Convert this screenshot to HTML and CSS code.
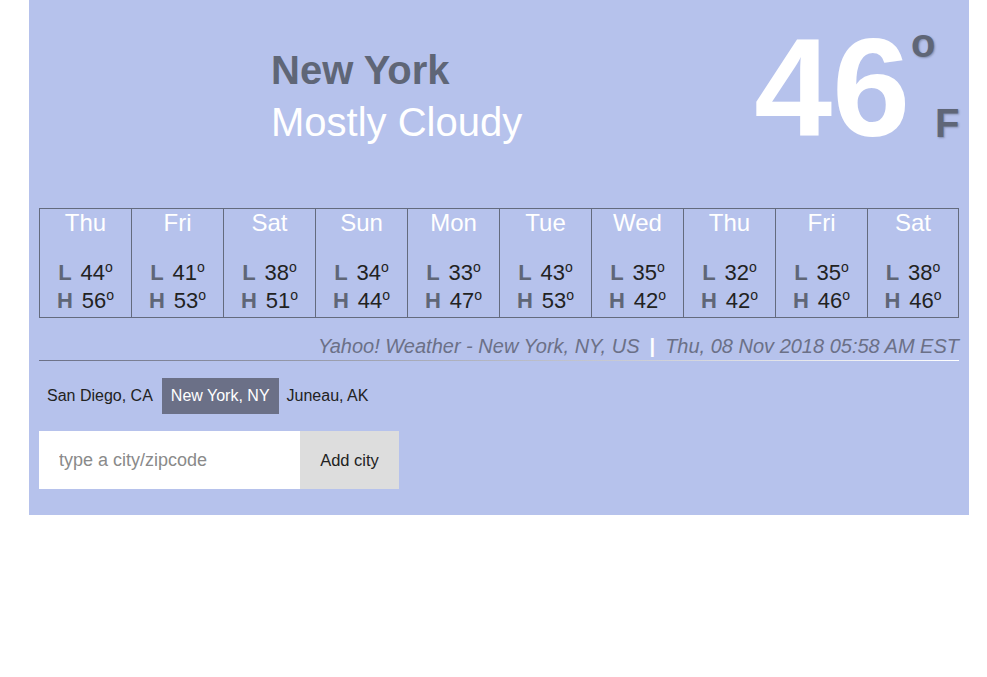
FILE: index.html
```html
<!DOCTYPE html>
<html>
<head>
<meta charset="utf-8">
<link rel="stylesheet" href="styles.css">
</head>
<body>
<div class="app">
  <header class="hero">
    <div class="place">
      <div class="city">New York</div>
      <div class="cond">Mostly Cloudy</div>
    </div>
    <div class="temp">
      <div class="temp-num">46</div>
      <div class="temp-unit">
        <span class="deg">o</span>
        <span class="unit">F</span>
      </div>
    </div>
  </header>

  <div class="forecast">
    <div class="day"><div class="dname">Thu</div><div class="row first"><b>L</b>44<span class="o">o</span></div><div class="row"><b>H</b>56<span class="o">o</span></div></div>
    <div class="day"><div class="dname">Fri</div><div class="row first"><b>L</b>41<span class="o">o</span></div><div class="row"><b>H</b>53<span class="o">o</span></div></div>
    <div class="day"><div class="dname">Sat</div><div class="row first"><b>L</b>38<span class="o">o</span></div><div class="row"><b>H</b>51<span class="o">o</span></div></div>
    <div class="day"><div class="dname">Sun</div><div class="row first"><b>L</b>34<span class="o">o</span></div><div class="row"><b>H</b>44<span class="o">o</span></div></div>
    <div class="day"><div class="dname">Mon</div><div class="row first"><b>L</b>33<span class="o">o</span></div><div class="row"><b>H</b>47<span class="o">o</span></div></div>
    <div class="day"><div class="dname">Tue</div><div class="row first"><b>L</b>43<span class="o">o</span></div><div class="row"><b>H</b>53<span class="o">o</span></div></div>
    <div class="day"><div class="dname">Wed</div><div class="row first"><b>L</b>35<span class="o">o</span></div><div class="row"><b>H</b>42<span class="o">o</span></div></div>
    <div class="day"><div class="dname">Thu</div><div class="row first"><b>L</b>32<span class="o">o</span></div><div class="row"><b>H</b>42<span class="o">o</span></div></div>
    <div class="day"><div class="dname">Fri</div><div class="row first"><b>L</b>35<span class="o">o</span></div><div class="row"><b>H</b>46<span class="o">o</span></div></div>
    <div class="day"><div class="dname">Sat</div><div class="row first"><b>L</b>38<span class="o">o</span></div><div class="row"><b>H</b>46<span class="o">o</span></div></div>
  </div>

  <div class="source">Yahoo! Weather - New York, NY, US<span class="sep">|</span>Thu, 08 Nov 2018 05:58 AM EST</div>
  <div class="rule"></div>

  <nav class="tabs">
    <span class="tab">San Diego, CA</span>
    <span class="tab active">New York, NY</span>
    <span class="tab">Juneau, AK</span>
  </nav>

  <form class="add">
    <input class="add-input" type="text" placeholder="type a city/zipcode">
    <button class="add-btn" type="button">Add city</button>
  </form>
</div>
</body>
</html>
```

FILE: styles.css
```css
* { box-sizing: border-box; }

body {
  margin: 0;
  background: #ffffff;
  font-family: "Liberation Sans", Arial, sans-serif;
}

.app {
  width: 940px;
  margin-left: 29px;
  background: #b6c2ec;
  padding: 0 10px 26px 10px;
}

.hero {
  height: 208px;
  display: flex;
  justify-content: space-between;
  align-items: flex-start;
}

.place {
  margin-left: 232px;
  margin-top: 44px;
}

.city {
  font-size: 40px;
  line-height: 52px;
  font-weight: bold;
  color: #5f6677;
}

.cond {
  font-size: 40px;
  line-height: 52px;
  color: #ffffff;
}

.temp {
  display: flex;
  align-items: flex-start;
}

.temp-num {
  font-size: 140px;
  line-height: 140px;
  font-weight: bold;
  color: #ffffff;
  margin-top: 18px;
  margin-right: 1px;
}

.temp-unit {
  display: flex;
  flex-direction: column;
  align-items: flex-start;
  margin-top: 23px;
  width: 48px;
}

.deg, .unit {
  font-size: 40px;
  line-height: 40px;
  font-weight: bold;
  color: #5f6677;
  text-shadow: 1px 1px 2px rgba(40, 45, 60, 0.35);
}

.unit {
  margin-top: 40px;
  margin-left: 24px;
}

.forecast {
  display: grid;
  grid-template-columns: repeat(9, 92px) 91px;
  width: 920px;
  border-top: 1px solid #646b7e;
  border-bottom: 1px solid #646b7e;
  border-right: 1px solid #646b7e;
}

.day {
  text-align: center;
  border-left: 1px solid #646b7e;
  padding-bottom: 2px;
}

.dname {
  font-size: 24px;
  line-height: 28px;
  color: #ffffff;
}

.row {
  font-size: 22px;
  line-height: 28px;
  color: #222222;
}

.row.first { margin-top: 22px; }

.row b {
  color: #5f6677;
  margin-right: 9px;
}

.o {
  font-size: 14px;
  vertical-align: 8px;
  line-height: 0;
}

.source {
  margin-top: 16px;
  text-align: right;
  font-size: 20px;
  line-height: 24px;
  font-style: italic;
  color: #6b7087;
}

.sep {
  font-style: normal;
  font-weight: bold;
  color: #ffffff;
  padding: 0 10px;
}

.rule {
  margin-top: 2px;
  height: 1px;
  background: linear-gradient(to right, #6b7087, #ffffff);
}

.tabs {
  margin-top: 17px;
  display: flex;
}

.tab {
  font-size: 16px;
  line-height: 18px;
  padding: 9px 8px;
  color: #222222;
}

.tab.active {
  background: #6b7087;
  color: #ffffff;
  margin-left: 1px;
  padding: 9px 9px;
}

.add {
  margin: 17px 0 0 0;
  display: flex;
}

.add-input {
  width: 261px;
  height: 58px;
  border: none;
  outline: none;
  padding: 0 20px;
  font-family: "Liberation Sans", Arial, sans-serif;
  font-size: 18px;
  background: #ffffff;
  color: #222222;
}

.add-input::placeholder { color: #8a8a8a; }

.add-btn {
  height: 58px;
  width: 99px;
  border: none;
  background: #dddddd;
  font-family: "Liberation Sans", Arial, sans-serif;
  font-size: 16.5px;
  color: #222222;
  padding: 0;
}
```
